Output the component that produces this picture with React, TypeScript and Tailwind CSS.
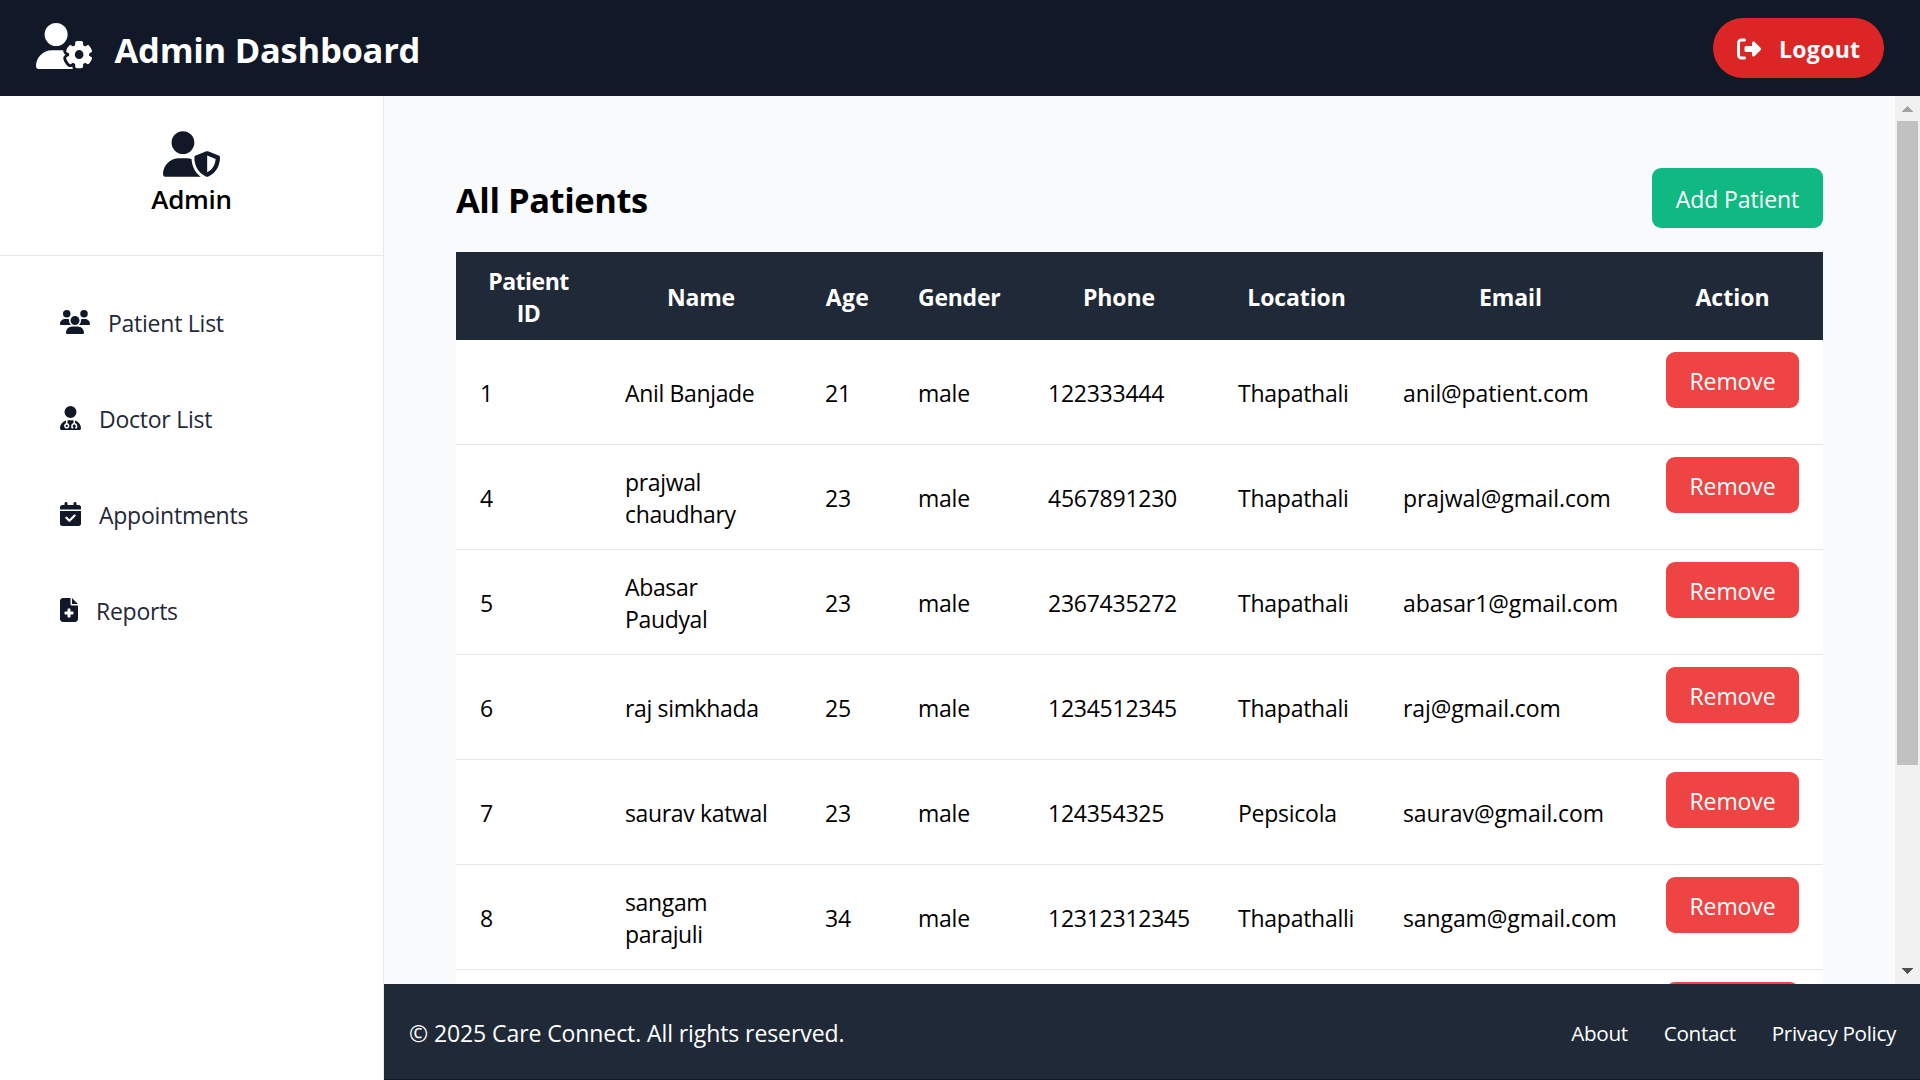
import React from "react";
import {
  FaCalendarCheck,
  FaFileMedical,
  FaRightFromBracket,
  FaUserDoctor,
  FaUserGear,
  FaUserShield,
  FaUsers,
} from "react-icons/fa6";

const navItems = [
  { label: "Patient List", icon: <FaUsers className="h-6 w-[30px]" /> },
  { label: "Doctor List", icon: <FaUserDoctor className="h-6 w-[21px]" /> },
  { label: "Appointments", icon: <FaCalendarCheck className="h-6 w-[21px]" /> },
  { label: "Reports", icon: <FaFileMedical className="h-6 w-[18px]" /> },
];

const columns = [
  { label: "Patient ID", width: "w-[145px]", tracking: "tracking-[-0.5px]" },
  { label: "Name", width: "w-[200px]", tracking: "tracking-[-0.25px]" },
  { label: "Age", width: "w-[93px]", tracking: "tracking-[0.3px]" },
  { label: "Gender", width: "w-[130px]", tracking: "tracking-[-0.25px]" },
  { label: "Phone", width: "w-[190px]", tracking: "tracking-[-0.1px]" },
  { label: "Location", width: "w-[165px]", tracking: "tracking-[-0.1px]" },
  { label: "Email", width: "w-[263px]", tracking: "tracking-[-0.1px]" },
  { label: "Action", width: "w-[181px]", tracking: "tracking-normal" },
];

const patients = [
  { id: 1, name: "Anil Banjade", age: 21, gender: "male", phone: "122333444", location: "Thapathali", email: "anil@patient.com" },
  { id: 4, name: "prajwal chaudhary", age: 23, gender: "male", phone: "4567891230", location: "Thapathali", email: "prajwal@gmail.com" },
  { id: 5, name: "Abasar Paudyal", age: 23, gender: "male", phone: "2367435272", location: "Thapathali", email: "abasar1@gmail.com" },
  { id: 6, name: "raj simkhada", age: 25, gender: "male", phone: "1234512345", location: "Thapathali", email: "raj@gmail.com" },
  { id: 7, name: "saurav katwal", age: 23, gender: "male", phone: "124354325", location: "Pepsicola", email: "saurav@gmail.com" },
  { id: 8, name: "sangam parajuli", age: 34, gender: "male", phone: "12312312345", location: "Thapathalli", email: "sangam@gmail.com" },
];

function Header() {
  return (
    <header className="flex h-24 shrink-0 items-center justify-between bg-[#111827] px-9 text-white">
      <div className="flex items-center">
        <FaUserGear className="-mt-1 h-[46px] w-[57.5px]" />
        <h1 className="ml-[21px] pt-[3px] text-[34.5px] leading-[48px] font-bold tracking-[-0.25px]">Admin Dashboard</h1>
      </div>
      <button className="flex h-[60px] w-[171px] items-center rounded-full bg-[#dc2626] pl-6">
        <FaRightFromBracket className="size-6 shrink-0 translate-y-px" />
        <span className="ml-[18px] pt-[2px] text-[23px] leading-8 font-bold tracking-[0.3px]">Logout</span>
      </button>
    </header>
  );
}

function Sidebar() {
  return (
    <aside className="flex w-96 shrink-0 flex-col border-r border-[#e5e7eb] bg-white">
      <div className="flex h-40 flex-col items-center border-b border-[#e5e7eb] pt-[35px]">
        <FaUserShield className="h-[46px] w-[57px] text-[#111827]" />
        <h2 className="mt-1 text-[26px] leading-9 font-semibold tracking-[-0.3px]">Admin</h2>
      </div>
      <nav className="flex flex-col gap-6 px-[60px] pt-[30px]">
        {navItems.map((item) => (
          <a key={item.label} className="flex h-[72px] items-center gap-[18px]">
            <span className="text-[#111827]">{item.icon}</span>
            <span className="pt-px tracking-[-0.25px] text-[#1f2937]">{item.label}</span>
          </a>
        ))}
      </nav>
    </aside>
  );
}

function RemoveButton() {
  return (
    <button className="flex h-14 w-[133px] justify-center rounded-[9px] bg-[#ef4444] pt-[13px] tracking-[-0.1px] text-white">
      Remove
    </button>
  );
}

function PatientTable() {
  return (
    <table className="w-[1367px] table-fixed border-separate border-spacing-0 bg-white">
      <thead className="bg-[#1f2937] text-white">
        <tr className="h-[88px]">
          {columns.map((col) => (
            <th key={col.label} className={`${col.width} ${col.tracking} px-6 pt-[2px] text-center align-middle font-bold`}>
              {col.label}
            </th>
          ))}
        </tr>
      </thead>
      <tbody>
        {patients.map((p) => (
          <tr key={p.id} className="h-[105px] *:border-b *:border-[#e5e7eb] *:pl-6 *:tracking-[-0.25px]">
            <td className="pt-[2px]">{p.id}</td>
            <td className="pt-[2px] pr-6">
              <span className="tracking-[-0.35px]">{p.name}</span>
            </td>
            <td className="pt-[2px]">{p.age}</td>
            <td className="pt-[2px]">{p.gender}</td>
            <td className="pt-[2px]">{p.phone}</td>
            <td className="pt-[2px]">{p.location}</td>
            <td className="pt-[2px]">
              <span className="tracking-[-0.1px]">{p.email}</span>
            </td>
            <td className="pt-3 align-top">
              <RemoveButton />
            </td>
          </tr>
        ))}
        <tr className="h-[105px]">
          <td colSpan={7} />
          <td className="pt-3 pl-6 align-top">
            <div className="h-14 w-[133px] rounded-[9px] bg-[#ef4444]" />
          </td>
        </tr>
      </tbody>
    </table>
  );
}

function Scrollbar() {
  return (
    <div className="flex w-[25px] shrink-0 flex-col items-center bg-[#f1f1f1]">
      <svg className="h-[25px] w-[25px] shrink-0" viewBox="0 0 25 25" shapeRendering="crispEdges">
        <path d="M7 16 L12.5 10 L18 16 Z" fill="#a3a3a3" />
      </svg>
      <div className="h-[644px] w-[21px] bg-[#c1c1c1]" />
      <svg className="mt-auto h-[25px] w-[25px] shrink-0" viewBox="0 0 25 25" shapeRendering="crispEdges">
        <path d="M7 9 L18 9 L12.5 15 Z" fill="#505050" />
      </svg>
    </div>
  );
}

function Footer() {
  return (
    <footer className="flex h-24 shrink-0 items-center justify-between border-b border-[#111827] bg-[#1f2937] px-6 text-white">
      <p className="pt-[3px] pl-px tracking-[-0.09px]">© 2025 Care Connect. All rights reserved.</p>
      <div className="flex gap-9 pt-[3px] text-[20.7px] tracking-[-0.35px]">
        <a>About</a>
        <a>Contact</a>
        <a>Privacy Policy</a>
      </div>
    </footer>
  );
}

export default function App() {
  return (
    <div className="flex h-[1080px] w-[1920px] flex-col overflow-hidden bg-white font-['Open_Sans','Noto_Sans',sans-serif] text-[23px] leading-8 text-black">
      <Header />
      <div className="flex min-h-0 flex-1">
        <Sidebar />
        <div className="flex min-w-0 flex-1 flex-col">
          <div className="flex min-h-0 flex-1">
            <main className="min-w-0 flex-1 overflow-hidden bg-[#f9fafc] px-[72px] pt-[72px]">
              <div className="mb-6 flex h-[60px] items-center justify-between">
                <h2 className="pt-1 text-[34.5px] leading-[48px] font-bold tracking-[-0.45px]">All Patients</h2>
                <button className="h-[60px] w-[171px] rounded-[9px] bg-[#10b981] pt-[2px] tracking-[-0.1px] text-white">
                  Add Patient
                </button>
              </div>
              <PatientTable />
            </main>
            <Scrollbar />
          </div>
          <Footer />
        </div>
      </div>
    </div>
  );
}
